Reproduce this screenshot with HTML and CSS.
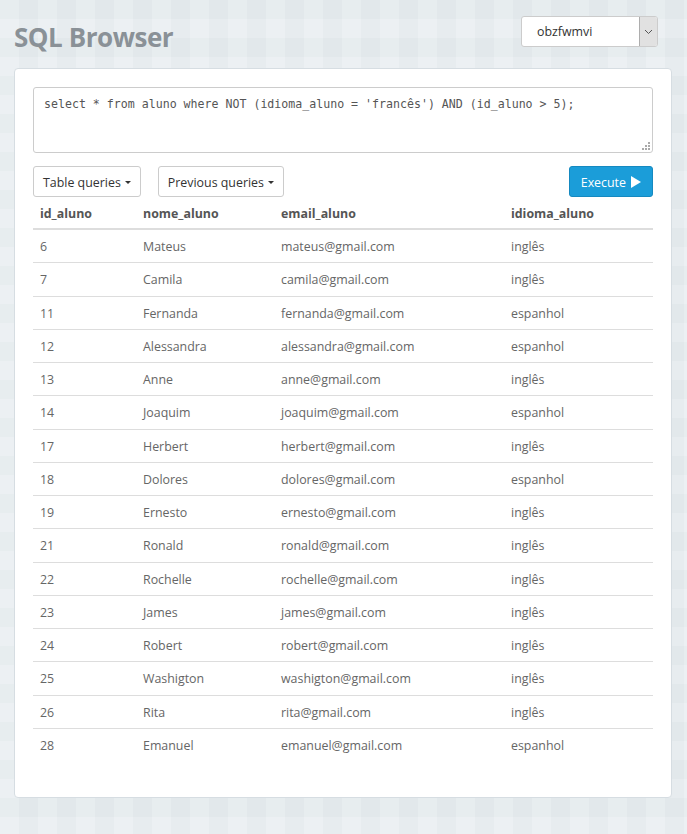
FILE: index.html
```html
<!DOCTYPE html>
<html>
<head>
<meta charset="utf-8">
<link rel="stylesheet" href="styles.css">
</head>
<body>
<header class="top">
  <h1 class="title">SQL Browser</h1>
  <div class="db-select">
    <span class="db-name">obzfwmvi</span>
    <span class="db-arrow"><svg width="9" height="6" viewBox="0 0 9 6"><path d="M1 1 L4.5 4.5 L8 1" fill="none" stroke="#555" stroke-width="1"/></svg></span>
  </div>
</header>
<main class="panel">
  <div class="editor">select * from aluno where NOT (idioma_aluno = 'francês') AND (id_aluno &gt; 5);<span class="grip"><svg width="8" height="8" viewBox="0 0 8 8" fill="#aaa"><rect x="6" y="0" width="2" height="2"/><rect x="3" y="3" width="2" height="2"/><rect x="6" y="3" width="2" height="2"/><rect x="0" y="6" width="2" height="2"/><rect x="3" y="6" width="2" height="2"/><rect x="6" y="6" width="2" height="2"/></svg></span></div>
  <div class="toolbar">
    <button class="btn btn-default">Table queries <span class="caret"></span></button>
    <button class="btn btn-default">Previous queries <span class="caret"></span></button>
    <span class="spacer"></span>
    <button class="btn btn-primary">Execute <svg width="10" height="12" viewBox="0 0 10 12"><path d="M0 0 L10 6 L0 12 Z" fill="#fff"/></svg></button>
  </div>
  <table class="results">
    <thead>
      <tr><th class="c1">id_aluno</th><th class="c2">nome_aluno</th><th class="c3">email_aluno</th><th class="c4">idioma_aluno</th></tr>
    </thead>
    <tbody>
      <tr><td>6</td><td>Mateus</td><td>mateus@gmail.com</td><td>inglês</td></tr>
      <tr><td>7</td><td>Camila</td><td>camila@gmail.com</td><td>inglês</td></tr>
      <tr><td>11</td><td>Fernanda</td><td>fernanda@gmail.com</td><td>espanhol</td></tr>
      <tr><td>12</td><td>Alessandra</td><td>alessandra@gmail.com</td><td>espanhol</td></tr>
      <tr><td>13</td><td>Anne</td><td>anne@gmail.com</td><td>inglês</td></tr>
      <tr><td>14</td><td>Joaquim</td><td>joaquim@gmail.com</td><td>espanhol</td></tr>
      <tr><td>17</td><td>Herbert</td><td>herbert@gmail.com</td><td>inglês</td></tr>
      <tr><td>18</td><td>Dolores</td><td>dolores@gmail.com</td><td>espanhol</td></tr>
      <tr><td>19</td><td>Ernesto</td><td>ernesto@gmail.com</td><td>inglês</td></tr>
      <tr><td>21</td><td>Ronald</td><td>ronald@gmail.com</td><td>inglês</td></tr>
      <tr><td>22</td><td>Rochelle</td><td>rochelle@gmail.com</td><td>inglês</td></tr>
      <tr><td>23</td><td>James</td><td>james@gmail.com</td><td>inglês</td></tr>
      <tr><td>24</td><td>Robert</td><td>robert@gmail.com</td><td>inglês</td></tr>
      <tr><td>25</td><td>Washigton</td><td>washigton@gmail.com</td><td>inglês</td></tr>
      <tr><td>26</td><td>Rita</td><td>rita@gmail.com</td><td>inglês</td></tr>
      <tr><td>28</td><td>Emanuel</td><td>emanuel@gmail.com</td><td>espanhol</td></tr>
    </tbody>
  </table>
</main>
</body>
</html>
```

FILE: styles.css
```css
html, body {
  margin: 0;
  padding: 0;
}
body {
  width: 687px;
  min-height: 834px;
  background-color: #e6ecef;
  background-image:
    linear-gradient(90deg, rgba(255,255,255,0.12) 50%, rgba(0,0,0,0.006) 50%),
    linear-gradient(0deg, rgba(255,255,255,0.1) 50%, rgba(0,0,0,0.006) 50%);
  background-size: 38px 38px, 38px 38px;
  font-family: "Open Sans", "Noto Sans", sans-serif;
  font-size: 12.4px;
  color: #666;
  padding: 16px 15px 37px 14px;
  box-sizing: border-box;
}
.top {
  display: flex;
  justify-content: space-between;
  align-items: flex-start;
  height: 52px;
}
.title {
  margin: 3px 0 0 0;
  font-size: 26px;
  font-weight: 700;
  color: #8a9197;
  letter-spacing: -0.45px;
  line-height: 36px;
}
.db-select {
  display: flex;
  width: 137px;
  height: 31px;
  margin-right: 14px;
  background: #fff;
  border: 1px solid #ccc;
  border-radius: 3px;
  box-sizing: border-box;
  overflow: hidden;
}
.db-name {
  flex: 1;
  padding-left: 15px;
  line-height: 29px;
  color: #333;
  font-size: 12.4px;
}
.db-arrow {
  width: 17px;
  background: #e1e1e1;
  border-left: 1px solid #adadad;
  display: flex;
  align-items: center;
  justify-content: center;
}
.panel {
  display: block;
  background: #fff;
  border: 1px solid #d6dde2;
  border-radius: 4px;
  padding: 18px 18px 18px 18px;
  height: 730px;
  box-sizing: border-box;
}
.editor {
  position: relative;
  height: 66px;
  border: 1px solid #ccc;
  border-radius: 3px;
  padding: 6px 10px;
  box-sizing: border-box;
  font-family: "DejaVu Sans Mono", monospace;
  font-size: 11.6px;
  line-height: 20px;
  color: #555;
}
.grip {
  position: absolute;
  right: 2px;
  bottom: 2px;
  line-height: 0;
}
.toolbar {
  display: flex;
  gap: 17px;
  margin-top: 13px;
}
.spacer {
  flex: 1;
}
.btn {
  height: 31px;
  border-radius: 3px;
  font-family: inherit;
  font-size: 12.4px;
  padding: 1px 9px 0 9px;
  cursor: pointer;
  display: flex;
  align-items: center;
  gap: 4px;
}
.btn-default {
  background: #fff;
  border: 1px solid #ccc;
  color: #333;
}
.btn-primary {
  background: #1b9dd9;
  border: 1px solid #1589c0;
  color: #fff;
  padding: 1px 11px 0 11px;
  gap: 5px;
}
.caret {
  display: inline-block;
  width: 0;
  height: 0;
  border-left: 3px solid transparent;
  border-right: 3px solid transparent;
  border-top: 3px solid #333;
  margin-left: 0;
}
.results {
  width: 100%;
  border-collapse: collapse;
  margin-top: 0;
}
.results th {
  text-align: left;
  font-weight: 700;
  color: #555;
  padding: 8px 7px 5px 7px;
  line-height: 18px;
  border-bottom: 2px solid #ddd;
}
.results td {
  padding: 8px 7px 6px 7px;
  line-height: 18.27px;
  border-top: 1px solid #ddd;
}
.results tbody tr:first-child td {
  border-top: 0;
}
.c1 { width: 89px; }
.c2 { width: 124px; }
.c3 { width: 216px; }
```
